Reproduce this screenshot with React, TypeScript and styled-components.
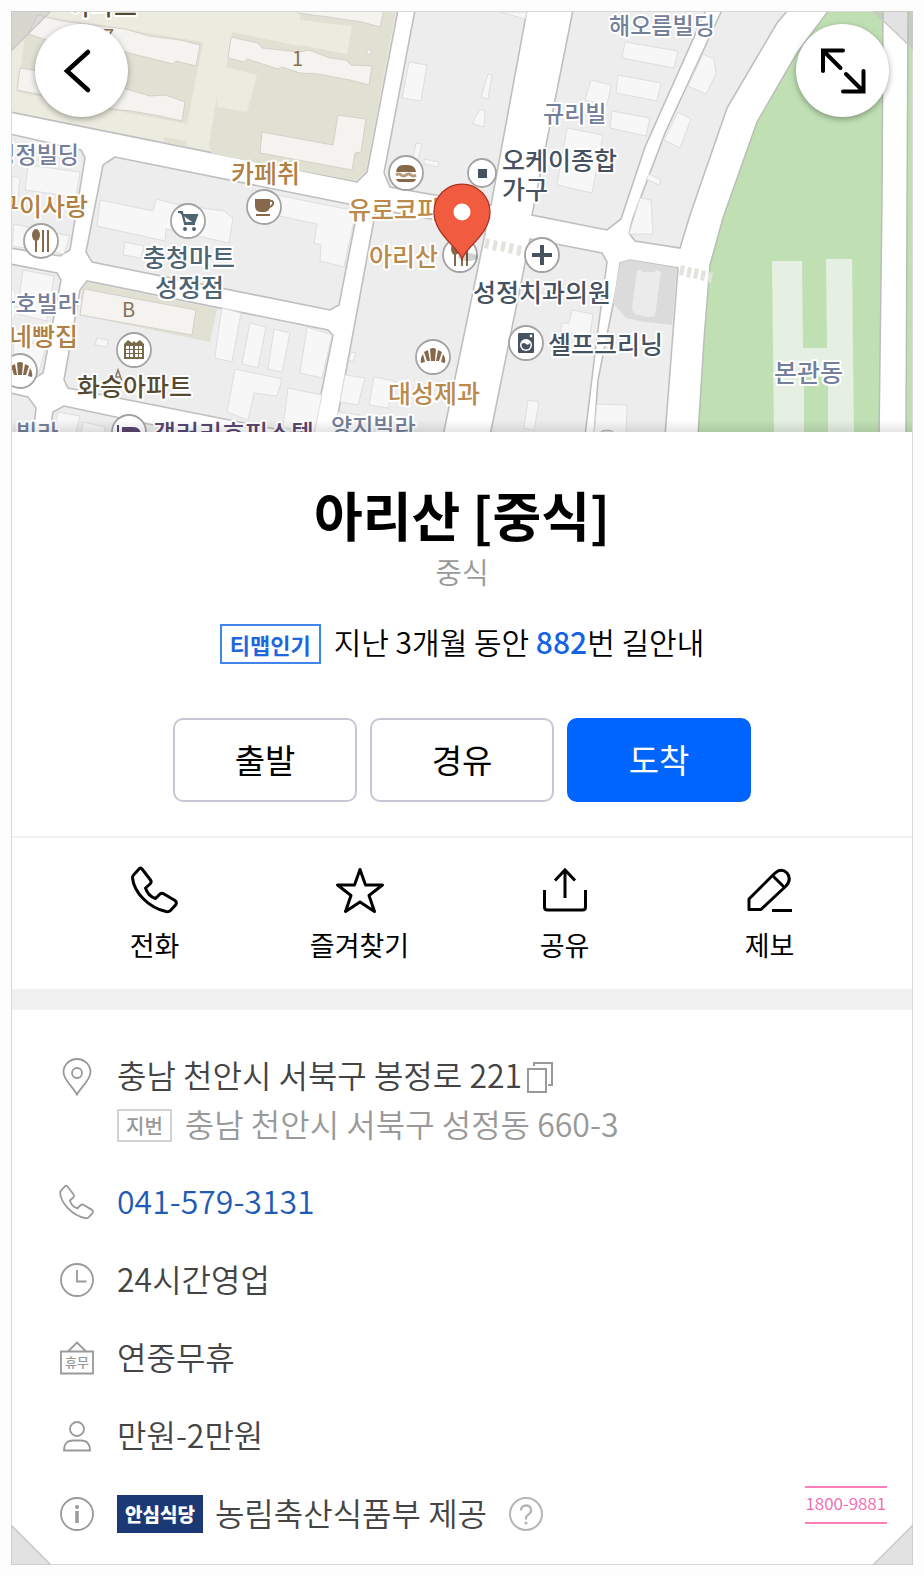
import React from 'react';
import styled, { createGlobalStyle, css } from 'styled-components';

const GlobalStyle = createGlobalStyle`
  *, *::before, *::after { box-sizing: border-box; }
  body {
    margin: 0;
    background: #fdfdfd;
    color: #000;
    font-family: "Noto Sans CJK KR", "Noto Sans", sans-serif;
  }
  h1, p, ul { margin: 0; padding: 0; }
  ul { list-style: none; }
  a { color: inherit; text-decoration: none; }
  button { font: inherit; color: inherit; cursor: pointer; }
`;

const Card = styled.main`
  position: relative;
  margin: 11px 11px 10px;
  background: #fff;
  border: 1px solid #d8d8d8;
`;

const CornerFold = styled.svg<{ $v: 'top' | 'bottom'; $h: 'left' | 'right' }>`
  position: absolute;
  width: 40px;
  height: 40px;
  z-index: 1;
  ${({ $v }) => ($v === 'top' ? css`top: -1px;` : css`bottom: -1px;`)}
  ${({ $h }) => ($h === 'left' ? css`left: -1px;` : css`right: -1px;`)}
`;

const MapPane = styled.section`
  position: relative;
  height: 420px;
  overflow: hidden;
  background: #fff;
`;

const MapCanvas = styled.svg`
  display: block;
  width: 100%;
  height: 100%;
`;

const MapShade = styled.div`
  position: absolute;
  inset: auto 0 0;
  height: 12px;
  background: linear-gradient(rgba(0, 0, 0, 0), rgba(0, 0, 0, 0.1));
`;

const RoundButton = styled.button<{ $side: 'left' | 'right' }>`
  position: absolute;
  z-index: 2;
  top: 12px;
  ${({ $side }) => ($side === 'left' ? css`left: 23px;` : css`right: 23px;`)}
  width: 93px;
  height: 93px;
  padding: 0;
  display: grid;
  place-items: center;
  border: 0;
  border-radius: 50%;
  background: #fff;
  box-shadow: 0 2px 6px rgba(0, 0, 0, 0.35);
`;

const Summary = styled.section`
  display: flex;
  flex-direction: column;
  align-items: center;
  padding: 48px 16px 34px;
  border-bottom: 2px solid #f0f0f0;
`;

const Title = styled.h1`
  font-size: 53px;
  line-height: 68px;
  font-weight: 700;
`;

const Category = styled.p`
  margin-top: 3px;
  font-size: 29px;
  line-height: 40px;
  font-weight: 350;
  color: #999;
`;

const Popularity = styled.p`
  display: flex;
  align-items: center;
  gap: 13px;
  margin-top: 33px;
  font-size: 30px;
  line-height: 34px;
  font-weight: 350;
`;

const PopularBadge = styled.span`
  height: 40px;
  padding: 0 8px;
  border: 2px solid #3f86ec;
  color: #1f66dd;
  font-size: 22px;
  line-height: 36px;
  font-weight: 700;
`;

const PopularText = styled.span`
  padding-bottom: 6px;
`;

const Count = styled.strong`
  color: #1463e6;
  font-weight: 500;
`;

const RouteButtons = styled.div`
  display: flex;
  justify-content: center;
  gap: 13px;
  width: 100%;
  margin-top: 54px;
`;

const RouteButton = styled.button<{ $primary?: boolean }>`
  flex: 0 1 184px;
  height: 84px;
  padding: 0 0 3px;
  border: 2px solid ${({ $primary }) => ($primary ? '#0064ff' : '#c5c8d4')};
  border-radius: 10px;
  background: ${({ $primary }) => ($primary ? '#0064ff' : '#fff')};
  color: ${({ $primary }) => ($primary ? '#fff' : '#000')};
  font-size: 33px;
  line-height: 40px;
`;

const Actions = styled.nav`
  display: grid;
  grid-template-columns: repeat(4, 1fr);
  padding: 28px 40px 26px;
  border-bottom: 21px solid #f1f1f1;
`;

const ActionButton = styled.button`
  display: flex;
  flex-direction: column;
  align-items: center;
  gap: 13px;
  padding: 0;
  border: 0;
  background: none;
  font-size: 27px;
  line-height: 36px;
  color: #000;
`;

const LineIcon = styled.svg`
  display: block;
  flex: none;
  fill: none;
  stroke: currentColor;
  overflow: visible;
`;

const InfoList = styled.ul`
  padding: 42px 25px 11px 47px;
  color: #444;
  font-size: 32px;
  line-height: 45px;
  font-weight: 350;
`;

const InfoRow = styled.li`
  display: flex;
  align-items: center;
  gap: 22px;
  min-height: 78px;
`;

const AddressRow = styled(InfoRow)`
  align-items: flex-start;
  margin-bottom: 13px;
`;

const IconSlot = styled.span`
  display: grid;
  place-items: center;
  flex: none;
  width: 36px;
  height: 49px;
  color: #999;
`;

const RowText = styled.span`
  padding-bottom: 4px;
`;

const AddressLine = styled.p<{ $muted?: boolean }>`
  display: flex;
  align-items: center;
  gap: ${({ $muted }) => ($muted ? '13px' : '5px')};
  min-height: 49px;
  color: ${({ $muted }) => ($muted ? '#999' : '#444')};
`;

const LotTag = styled.span`
  height: 33px;
  padding: 0 7px;
  border: 2px solid #d3d3d3;
  font-size: 20px;
  line-height: 29px;
  font-weight: 500;
`;

const IconButton = styled.button`
  display: grid;
  place-items: center;
  padding: 0;
  border: 0;
  background: none;
  color: #999;
`;

const PhoneLink = styled.a`
  padding-bottom: 4px;
  color: #1f5bb5;
`;

const Certified = styled.span`
  display: flex;
  align-items: center;
  gap: 12px;
`;

const SafeBadge = styled.span`
  height: 38px;
  padding: 0 8px;
  background: #1b3975;
  color: #fff;
  font-size: 19px;
  line-height: 38px;
  font-weight: 900;
`;

const HelpButton = styled(IconButton)`
  color: #b5b5ba;
`;

const Hotline = styled.a`
  align-self: flex-start;
  margin: 11px 0 0 auto;
  padding: 0 1px 4px;
  border: solid #ff7fb9;
  border-width: 2px 0;
  color: #f564ac;
  font-size: 17px;
  line-height: 30px;
  font-weight: 350;
`;

/* ---------- map ---------- */

const blocks = [
  '115,157 103,165 86,252 92,262 330,310 339,305 357,213 353,205',
  '87,281 80,290 64,380 68,388 300,434 313,434 333,335 328,330',
  '10,134 81,150 85,158 70,250 60,256 10,248',
  '10,264 57,273 61,280 43,373 35,378 10,374',
  '10,393 28,397 36,408 33,436 10,436',
  '53,412 64,406 205,436 49,436',
  '415,10 527,10 491,205 390,187 384,173',
  '376,209 486,229 443,436 334,436',
  '573,10 706,10 645,147 621,219 607,230 532,215',
  '722,10 788,10 777,23 727,108 690,215 680,248 635,241 629,233 633,218 665,133',
  '530,239 602,253 607,262 596,345 585,436 490,436',
  '620,263 630,260 678,268 665,436 594,436 598,380 616,290',
];

const buildings = [
  '100,200 153,211 156,199 180,205 224,211 233,218 229,243 166,229 165,241 97,226',
  '125,242 144,246 141,258 123,255',
  '252,190 356,211 344,267 320,261 321,245 314,243 317,224 252,210',
  '222,308 241,313 232,362 215,358 217,340',
  '250,323 266,327 258,368 242,364',
  '274,329 290,333 282,372 268,369',
  '307,327 332,335 322,378 300,373',
  '235,369 282,379 277,396 254,393 248,420 227,412',
  '288,388 322,395 314,434 283,427',
  '97,338 108,340 107,347 95,345',
  '28,165 80,172 76,197 25,190',
  '12,176 20,178 17,210 12,208',
  '14,224 70,236 64,254 12,246',
  '23,270 54,276 47,321 17,314',
  '14,340 46,346 38,376 12,372',
  '58,412 80,416 75,436 54,434',
  '83,422 105,427 103,436 81,436',
  '409,62 427,65 421,101 402,98',
  '488,74 492,75 488,99 481,97',
  '480,110 485,110 484,127 473,124 475,117',
  '416,143 422,144 418,159 413,157',
  '424,159 439,162 438,167 424,164',
  '500,12 527,12 525,19',
  '351,352 356,353 353,362 349,360',
  '345,375 365,378 358,405 340,402',
  '374,377 395,381 388,408 369,405',
  '338,412 360,415 356,436 334,436',
  '591,80 611,85 607,105 585,100',
  '567,128 603,135 592,193 557,185',
  '625,42 678,51 674,68 622,58',
  '618,75 661,83 657,101 616,93',
  '612,111 650,118 646,136 610,128',
  '703,54 714,59 716,74 706,94 688,86',
  '678,112 691,119 680,148 664,140',
  '649,174 661,180 659,185 646,179',
  '640,198 651,200 653,234 629,234',
  '572,310 593,314 590,335 560,332 562,323 569,323',
  '528,400 539,402 534,430 524,428',
  '597,404 627,405 626,436 594,436',
];

const aptBuildings = [
  '28,34 38,15 62,21 125,29 149,36 180,40 200,45 196,66 176,61 173,64 125,52 60,44',
  '20,68 44,72 120,87 150,96 165,95 185,102 182,121 168,118 160,116 131,111 112,109 17,90',
  '231,37 258,43 262,48 300,52 309,50 330,58 346,60 351,65 372,66 369,85 350,80 318,74 300,73 282,67 278,69 247,59 244,62 228,58',
  '298,10 384,10 380,27 362,22 328,17 298,13',
  '262,132 333,145 338,115 366,119 361,152 355,153 352,170 260,153',
  '84,289 196,310 192,335 80,315',
];

const stripes = (x: number, y: number, n: number, step: number) =>
  Array.from({ length: n }, (_, i) => ({ x: x + i * step, y: y + Math.round(i * 1.7) }));

const crossing = [...stripes(485, 238, 6, 8), ...stripes(680, 265, 5, 7)];

const tones = {
  brown: '#b07f43',
  tan: '#b98a4c',
  slate: '#46525f',
  teal: '#4d6473',
  blue: '#74809a',
  dark: '#574a33',
  purple: '#5a4670',
};

type Label = { t: string; x: number; y: number; tone: keyof typeof tones; small?: boolean; end?: boolean };

const labels: Label[] = [
  { t: '아파트', x: 68, y: 15, tone: 'dark' },
  { t: '해오름빌딩', x: 609, y: 34, tone: 'blue', small: true },
  { t: '규리빌', x: 543, y: 122, tone: 'blue', small: true },
  { t: '오케이종합', x: 502, y: 170, tone: 'slate' },
  { t: '가구', x: 502, y: 199, tone: 'slate' },
  { t: '카페취', x: 231, y: 183, tone: 'brown' },
  { t: '유로코피', x: 348, y: 219, tone: 'tan' },
  { t: '아리산', x: 369, y: 266, tone: 'tan' },
  { t: '성정빌딩', x: 79, y: 163, tone: 'blue', small: true, end: true },
  { t: '구이사랑', x: 88, y: 216, tone: 'brown', end: true },
  { t: '가호빌라', x: 79, y: 312, tone: 'blue', small: true, end: true },
  { t: '동네빵집', x: 78, y: 346, tone: 'brown', end: true },
  { t: '충청마트', x: 143, y: 267, tone: 'teal' },
  { t: '성정점', x: 155, y: 297, tone: 'teal' },
  { t: '화승아파트', x: 77, y: 396, tone: 'dark' },
  { t: '갤러리호피스텔', x: 153, y: 443, tone: 'purple' },
  { t: '빌라', x: 16, y: 441, tone: 'blue', small: true },
  { t: '양지빌라', x: 331, y: 435, tone: 'blue', small: true },
  { t: '대성제과', x: 388, y: 403, tone: 'tan' },
  { t: '성정치과의원', x: 473, y: 302, tone: 'slate' },
  { t: '셀프크리닝', x: 548, y: 354, tone: 'slate' },
  { t: '본관동', x: 774, y: 382, tone: 'blue' },
];

const MapLabel = styled.text<{ $tone: string; $small?: boolean }>`
  font-size: ${({ $small }) => ($small ? '23px' : '25px')};
  font-weight: 500;
  fill: ${({ $tone }) => $tone};
  stroke: #fff;
  stroke-width: 4px;
  stroke-linejoin: round;
  paint-order: stroke;
`;

const UnitLabel = styled.text`
  font-size: 20px;
  fill: #86705a;
`;

const Utensils = () => (
  <g fill="#86684a">
    <ellipse cx="-5" cy="-6" rx="4" ry="6" />
    <path d="M-6 -2h2v13h-2zM1-11h2v22H1zM6-11h2v22H6z" />
  </g>
);

const Croissant = () => (
  <g fill="#86684a">
    <path d="M-3-8q3-2 6 0l-1 12h-4zM-5-7l-4 2 3 9 3 0zM5-7l4 2-3 9-3 0zM-10-3q-3 4-2 9l4-1zM10-3q3 4 2 9l-4-1z" />
  </g>
);

const Poi = ({ x, y, r = 17, children }: { x: number; y: number; r?: number; children?: React.ReactNode }) => (
  <g transform={`translate(${x} ${y})`}>
    <circle r={r} fill="#fff" stroke="#a3a3a3" strokeWidth="1.8" />
    {children}
  </g>
);

const MapView = () => (
  <MapCanvas viewBox="12 12 900 420" preserveAspectRatio="xMidYMid slice" role="img" aria-label="아리산 주변 지도">
    <rect x="-400" y="0" width="1800" height="440" fill="#fff" />
    <g stroke="#bfbfbf" strokeWidth="1.6">
      <polygon points="10,10 398,10 367,172 357,182 10,112" fill="#ebebdf" />
      {blocks.map((p) => (
        <polygon key={p} points={p} fill="#ededed" />
      ))}
    </g>
    <g fill="#e0e0d3">
      <polygon points="50,17 203,42 187,124 17,92 25,38" />
      <polygon points="232,32 300,46 300,20 352,26 347,54 300,45 232,32 235,10 396,10 366,171 356,181 212,154 209,145 217,95 217,107 247,112 257,75 226,67" />
      <polygon points="165,137 186,141 186,147 163,142" />
      <polygon points="87,282 217,309 210,342 80,315 82,290" />
    </g>
    <polygon points="205,10 300,10 300,46 232,32 207,27" fill="#ebebdf" />
    <polygon points="300,20 352,26 347,54 300,45" fill="#ebebdf" />
    <g fill="#f4f3ef" stroke="#d2d1ca" strokeWidth="1">
      {aptBuildings.map((p) => (
        <polygon key={p} points={p} />
      ))}
      <circle cx="369" cy="52" r="2.5" />
    </g>
    <polygon points="620,263 630,260 677,268 672,325 645,322 626,318 613,303" fill="#dbdbdb" />
    <g fill="#f7f7f7" stroke="#dedede" strokeWidth="1">
      {buildings.map((p) => (
        <polygon key={p} points={p} />
      ))}
    </g>
    <path d="M637 270h4l1 2h13l1-2 5 2-1 8-5 36-8 1-13-3-2-6z" fill="#ebebeb" />
    <g fill="#c0e0b4" stroke="#b9beb6" strokeWidth="1.5">
      <polygon points="829,10 883,10 882,200 879,436 698,436 704,340 710,265 723,218 757,122 797,53" />
      <polygon points="908,10 914,10 914,436 906,436" />
    </g>
    <path d="M772 261h30l1 87h24l-1-89h26l2 177h-26l0-59h-24v59h-30z" fill="#e5efe2" />
    {crossing.map(({ x, y }) => (
      <path key={x} d={`M${x + 1} ${y}l4 1-2 10-4-1z`} fill="#e3e3dc" />
    ))}

    <UnitLabel x="103" y="44">7</UnitLabel>
    <UnitLabel x="292" y="66">1</UnitLabel>
    <UnitLabel x="122" y="317">B</UnitLabel>
    <path d="M114 381l4-11 4 11M116 377h4" fill="none" stroke="#8a7a62" strokeWidth="1.5" />

    <Poi x={188} y={221}>
      <path d="M-10-9h4l3 12h10M-5-6h14l-3 8h-9z" fill="#4d6473" stroke="#4d6473" strokeWidth="2" />
      <circle cx="-3" cy="8" r="2" fill="#4d6473" />
      <circle cx="6" cy="8" r="2" fill="#4d6473" />
    </Poi>
    <Poi x={264} y={207}>
      <path d="M-9-8H6V-1q0 5-5 6h-5q-5-1-5-6z" fill="#86684a" />
      <path d="M5-6q5-1 4 3-1 3-5 3" fill="none" stroke="#86684a" strokeWidth="2" />
      <path d="M-8 8H6" stroke="#86684a" strokeWidth="2" />
    </Poi>
    <Poi x={41} y={241}><Utensils /></Poi>
    <Poi x={134} y={350}>
      <path d="M-10-6l4-4 4 3 2-2 2 2 4-3 4 4V9h-20z" fill="#7a6a4c" />
      <path d="M-8-4h3v3h-3zM-4-4h3v3h-3zM1-4h3v3H1zM5-4h3v3H5zM-8 0h3v3h-3zM-4 0h3v3h-3zM1 0h3v3H1zM5 0h3v3H5zM-8 4h3v3h-3zM-4 4h3v3h-3zM1 4h3v3H1zM5 4h3v3H5z" fill="#fff" />
    </Poi>
    <Poi x={20} y={371}><Croissant /></Poi>
    <Poi x={129} y={432}>
      <path d="M-11-7v14M-6-4h10q6 0 7 6v5H-6z" fill="#5a4670" stroke="#5a4670" strokeWidth="2" />
    </Poi>
    <Poi x={406} y={173}>
      <path d="M-10-1q1-7 7-7h5q7 0 8 7zM-10 6h20q-1 3-4 3H-6q-3 0-4-3z" fill="#86684a" />
      <path d="M-10 2q3-2 5 0t5 0 5 0 5 0" fill="none" stroke="#b79c7a" strokeWidth="3" />
    </Poi>
    <Poi x={482} y={173} r={14}>
      <rect x="-4" y="-4" width="9" height="9" fill="#46525f" />
    </Poi>
    <Poi x={460} y={255}><Utensils /></Poi>
    <Poi x={542} y={255}>
      <path d="M-10 0H10M0-10V10" stroke="#46525f" strokeWidth="4" />
    </Poi>
    <Poi x={526} y={343}>
      <rect x="-8" y="-10" width="16" height="20" rx="1" fill="#46525f" />
      <circle cy="2" r="6" fill="#fff" />
      <circle cy="2" r="4.5" fill="#46525f" />
      <path d="M-4 1q2-2 4 0t4-1q-1-4-4-3-4 0-4 4z" fill="#fff" />
      <circle cx="5" cy="-7" r="1.4" fill="#fff" />
    </Poi>
    <Poi x={433} y={357}><Croissant /></Poi>
    <circle cx="607" cy="441" r="11" fill="#ddd" stroke="#aaa" />

    {labels.map(({ t, x, y, tone, small, end }) => (
      <MapLabel key={t} x={x} y={y} $tone={tones[tone]} $small={small} textAnchor={end ? 'end' : 'start'}>
        {t}
      </MapLabel>
    ))}

    <ellipse cx="468" cy="257" rx="10" ry="4" fill="#000" opacity="0.18" />
    <path
      d="M462 259C458 247 434 234 434 212a28 28 0 0 1 56 0C490 234 466 247 462 259z"
      fill="#f15c40"
      stroke="#ac3322"
      strokeWidth="1.3"
    />
    <circle cx="462" cy="212" r="8.5" fill="#fff" />
  </MapCanvas>
);

/* ---------- icons ---------- */

const handset =
  'M9.5 2.5 Q11 1.5 12 3 L20.5 14 Q22 16 20 18 L15.5 22 C17 27 21 31 25.5 32.5 L30 28 Q32 26.5 34 28 L45 34.5 Q47 36 46 38.5 L40.5 44.5 Q39 46 36 45.5 C18 41.5 4 26 2.5 12 Q2.5 10 3.5 9 Z';

const CallIcon = ({ size, weight }: { size: number; weight: number }) => (
  <LineIcon width={size} height={size} viewBox="1 0 48 48" strokeWidth={weight} strokeLinejoin="round">
    <path d={handset} />
  </LineIcon>
);

const StarIcon = () => (
  <LineIcon width="48" height="48" viewBox="0 0 48 48" strokeWidth="3" strokeLinejoin="round">
    <path d="M24 3.5l5.5 15.5h17L33 29.5 38.5 45.5 24 36 9.5 45.5 15 29.5 1.5 19h17z" />
  </LineIcon>
);

const ShareIcon = () => (
  <LineIcon width="48" height="48" viewBox="0 0 48 48" strokeWidth="3">
    <path d="M24 32V4M14 14.5 24 4l10 10.5M3.5 24v17q0 3 3 3h35q3 0 3-3V24" />
  </LineIcon>
);

const EditIcon = () => (
  <LineIcon width="48" height="48" viewBox="0 0 48 48" strokeWidth="3" strokeLinejoin="round">
    <path d="M3 43.5V33L28 8q7-7 13-1 5 6-1 13L15 43.5zM27 10 38.5 21.5" />
    <path d="M26 44.5h20" />
  </LineIcon>
);

const PlaceIcon = () => (
  <LineIcon width="30" height="38" viewBox="0 0 30 38" strokeWidth="1.8">
    <path d="M15 36.5C11 29 1.5 22 1.5 14a13.5 13 0 0 1 27 0C28.5 22 19 29 15 36.5z" />
    <circle cx="15" cy="15" r="5" />
  </LineIcon>
);

const CopyIcon = () => (
  <LineIcon width="26" height="32" viewBox="0 0 26 32" strokeWidth="2">
    <path d="M1 8h18v23H1zM7 5V2h18v22h-4" />
  </LineIcon>
);

const ClockIcon = () => (
  <LineIcon width="34" height="34" viewBox="0 0 34 34" strokeWidth="1.8">
    <circle cx="17" cy="17" r="16" />
    <path d="M17 7v11.5h9.5" />
  </LineIcon>
);

const SignText = styled.text`
  font-size: 13px;
  font-weight: 500;
  fill: currentColor;
  stroke: none;
`;

const ClosedIcon = () => (
  <LineIcon width="34" height="34" viewBox="0 0 34 34" strokeWidth="1.8">
    <path d="M1 10.5h32v22H1zM8 10.5l9-9 9 9" />
    <SignText x="17" y="26" textAnchor="middle">휴무</SignText>
  </LineIcon>
);

const PersonIcon = () => (
  <LineIcon width="30" height="32" viewBox="0 0 30 32" strokeWidth="1.8">
    <circle cx="15" cy="9" r="7" />
    <path d="M2 30.5q0-10 9-10h8q9 0 9 10z" />
  </LineIcon>
);

const InfoIcon = () => (
  <LineIcon width="34" height="34" viewBox="0 0 34 34" strokeWidth="1.8">
    <circle cx="17" cy="17" r="16" />
    <path d="M17 14v12" strokeWidth="3.5" />
    <circle cx="17" cy="10" r="2" fill="currentColor" stroke="none" />
  </LineIcon>
);

const HelpIcon = () => (
  <LineIcon width="34" height="34" viewBox="0 0 34 34" strokeWidth="2">
    <circle cx="17" cy="17" r="16" />
    <path d="M12 13.5q0-5 5-5t5 4.5q0 3-2.5 4.5T17 21v1.5" strokeWidth="2.4" />
    <circle cx="17" cy="26" r="1.6" fill="currentColor" stroke="none" />
  </LineIcon>
);

const BackIcon = () => (
  <LineIcon width="48" height="48" viewBox="0 0 48 48" strokeWidth="4.5" strokeLinecap="round" strokeLinejoin="miter">
    <path d="M30 5 9 24l21 19" />
  </LineIcon>
);

const ExpandIcon = () => (
  <LineIcon width="48" height="48" viewBox="0 0 48 48" strokeWidth="4" strokeLinecap="round" strokeLinejoin="miter">
    <path d="M24 3.5H4V24M4 3.5 21.5 21M27 27l17.5 17.5M24 44.5h20.5V24" />
  </LineIcon>
);

const Fold = ({ v, h, points, alpha }: { v: 'top' | 'bottom'; h: 'left' | 'right'; points: string; alpha?: boolean }) => (
  <CornerFold $v={v} $h={h} viewBox="0 0 40 40" aria-hidden="true">
    <polygon points={points} fill={alpha ? 'rgba(190,190,190,0.45)' : '#e2e2e2'} stroke="#c8c8c8" strokeWidth="1.5" />
  </CornerFold>
);

const actions = [
  { label: '전화', icon: <CallIcon size={48} weight={3} /> },
  { label: '즐겨찾기', icon: <StarIcon /> },
  { label: '공유', icon: <ShareIcon /> },
  { label: '제보', icon: <EditIcon /> },
];

const facts = [
  { text: '24시간영업', icon: <ClockIcon /> },
  { text: '연중무휴', icon: <ClosedIcon /> },
  { text: '만원-2만원', icon: <PersonIcon /> },
];

export default function App() {
  return (
    <>
      <GlobalStyle />
      <Card>
        <MapPane>
          <MapView />
          <MapShade />
          <RoundButton $side="left" type="button" aria-label="뒤로">
            <BackIcon />
          </RoundButton>
          <RoundButton $side="right" type="button" aria-label="지도 확대">
            <ExpandIcon />
          </RoundButton>
        </MapPane>

        <Summary>
          <Title>아리산 [중식]</Title>
          <Category>중식</Category>
          <Popularity>
            <PopularBadge>티맵인기</PopularBadge>
            <PopularText>
              지난 3개월 동안 <Count>882</Count>번 길안내
            </PopularText>
          </Popularity>
          <RouteButtons>
            <RouteButton type="button">출발</RouteButton>
            <RouteButton type="button">경유</RouteButton>
            <RouteButton type="button" $primary>도착</RouteButton>
          </RouteButtons>
        </Summary>

        <Actions>
          {actions.map(({ label, icon }) => (
            <ActionButton key={label} type="button">
              {icon}
              {label}
            </ActionButton>
          ))}
        </Actions>

        <InfoList>
          <AddressRow>
            <IconSlot><PlaceIcon /></IconSlot>
            <div>
              <AddressLine>
                <RowText>충남 천안시 서북구 봉정로 221</RowText>
                <IconButton type="button" aria-label="주소 복사"><CopyIcon /></IconButton>
              </AddressLine>
              <AddressLine $muted>
                <LotTag>지번</LotTag>
                <RowText>충남 천안시 서북구 성정동 660-3</RowText>
              </AddressLine>
            </div>
          </AddressRow>
          <InfoRow>
            <IconSlot><CallIcon size={36} weight={2.4} /></IconSlot>
            <PhoneLink href="tel:041-579-3131">041-579-3131</PhoneLink>
          </InfoRow>
          {facts.map(({ text, icon }) => (
            <InfoRow key={text}>
              <IconSlot>{icon}</IconSlot>
              <RowText>{text}</RowText>
            </InfoRow>
          ))}
          <InfoRow>
            <IconSlot><InfoIcon /></IconSlot>
            <Certified>
              <SafeBadge>안심식당</SafeBadge>
              <RowText>농림축산식품부 제공</RowText>
            </Certified>
            <HelpButton type="button" aria-label="안심식당 안내"><HelpIcon /></HelpButton>
            <Hotline href="tel:1800-9881">1800-9881</Hotline>
          </InfoRow>
        </InfoList>

        <Fold v="top" h="left" points="0,0 40,0 0,40" alpha />
        <Fold v="top" h="right" points="0,0 40,0 40,38" alpha />
        <Fold v="bottom" h="left" points="0,0 40,40 0,40" />
        <Fold v="bottom" h="right" points="40,0 40,40 0,40" />
      </Card>
    </>
  );
}
